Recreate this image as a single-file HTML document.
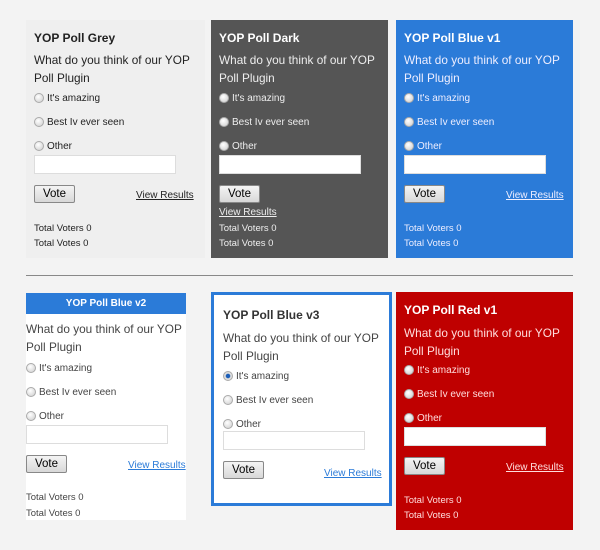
<!DOCTYPE html><html><head><style>
body{margin:0;width:600px;height:550px;background:#f3f3f3;font-family:"Liberation Sans",Arial,sans-serif;position:relative;overflow:hidden}
.p{position:absolute}
.a{position:absolute;white-space:nowrap}
.t{font-weight:bold;font-size:12px}
.q{font-size:11.8px;line-height:18px}
.o{font-size:10px}
.r{display:inline-block;width:10px;height:10px;border-radius:50%;background:radial-gradient(circle at 40% 35%,#fff,#ccc);border:1px solid #aaa;vertical-align:-2px;margin-right:3px;box-sizing:border-box}
.in{position:absolute;height:19px;background:#fff;border:1px solid #ddd;box-sizing:border-box}
.b{position:absolute;width:41px;height:18px;border:1px solid #888;border-radius:2px;background:linear-gradient(#f4f4f4,#d8d8d8);font-size:11.5px;text-align:center;line-height:16px;color:#000;box-sizing:border-box}
.v{font-size:10px;text-decoration:underline}
.s{font-size:9.5px}
</style></head><body>
<!-- grey -->
<div class="p" style="left:26px;top:20px;width:179px;height:238px;background:#efefef;color:#222">
<div class="a t" style="left:8px;top:11px">YOP Poll Grey</div>
<div class="a q" style="left:8px;top:31px">What do you think of our YOP<br>Poll Plugin</div>
<div class="a o" style="left:8px;top:73px"><span class="r"></span>It's amazing</div>
<div class="a o" style="left:8px;top:97px"><span class="r"></span>Best Iv ever seen</div>
<div class="a o" style="left:8px;top:121px"><span class="r"></span>Other</div>
<div class="in" style="left:8px;top:135px;width:142px"></div>
<div class="b" style="left:8px;top:165px">Vote</div>
<div class="a v" style="left:110px;top:170px;color:#222">View Results</div>
<div class="a s" style="left:8px;top:203px">Total Voters 0</div>
<div class="a s" style="left:8px;top:218px">Total Votes 0</div>
</div>
<!-- dark -->
<div class="p" style="left:211px;top:20px;width:177px;height:238px;background:#555;color:#eee">
<div class="a t" style="left:8px;top:11px;color:#fff">YOP Poll Dark</div>
<div class="a q" style="left:8px;top:31px">What do you think of our YOP<br>Poll Plugin</div>
<div class="a o" style="left:8px;top:73px"><span class="r"></span>It's amazing</div>
<div class="a o" style="left:8px;top:97px"><span class="r"></span>Best Iv ever seen</div>
<div class="a o" style="left:8px;top:121px"><span class="r"></span>Other</div>
<div class="in" style="left:8px;top:135px;width:142px"></div>
<div class="b" style="left:8px;top:165px">Vote</div>
<div class="a v" style="left:8px;top:187px">View Results</div>
<div class="a s" style="left:8px;top:203px">Total Voters 0</div>
<div class="a s" style="left:8px;top:218px">Total Votes 0</div>
</div>
<!-- blue v1 -->
<div class="p" style="left:396px;top:20px;width:177px;height:238px;background:#2b7bd8;color:#eef">
<div class="a t" style="left:8px;top:11px;color:#fff">YOP Poll Blue v1</div>
<div class="a q" style="left:8px;top:31px">What do you think of our YOP<br>Poll Plugin</div>
<div class="a o" style="left:8px;top:73px"><span class="r"></span>It's amazing</div>
<div class="a o" style="left:8px;top:97px"><span class="r"></span>Best Iv ever seen</div>
<div class="a o" style="left:8px;top:121px"><span class="r"></span>Other</div>
<div class="in" style="left:8px;top:135px;width:142px"></div>
<div class="b" style="left:8px;top:165px">Vote</div>
<div class="a v" style="left:110px;top:170px">View Results</div>
<div class="a s" style="left:8px;top:203px">Total Voters 0</div>
<div class="a s" style="left:8px;top:218px">Total Votes 0</div>
</div>
<div class="p" style="left:26px;top:275px;width:547px;height:1px;background:#888"></div>
<!-- blue v2 -->
<div class="p" style="left:26px;top:293px;width:160px;height:227px;background:#fff;color:#444">
<div class="a" style="left:0;top:0;width:160px;height:21px;background:#2b7bd8;color:#fff;font-weight:bold;font-size:10px;text-align:center;line-height:21px">YOP Poll Blue v2</div>
<div class="a q" style="left:0;top:27px">What do you think of our YOP<br>Poll Plugin</div>
<div class="a o" style="left:0;top:70px"><span class="r"></span>It's amazing</div>
<div class="a o" style="left:0;top:94px"><span class="r"></span>Best Iv ever seen</div>
<div class="a o" style="left:0;top:118px"><span class="r"></span>Other</div>
<div class="in" style="left:0;top:132px;width:142px"></div>
<div class="b" style="left:0;top:162px">Vote</div>
<div class="a v" style="left:102px;top:167px;color:#2b7bd8">View Results</div>
<div class="a s" style="left:0;top:199px">Total Voters 0</div>
<div class="a s" style="left:0;top:215px">Total Votes 0</div>
</div>
<!-- blue v3 -->
<div class="p" style="left:211px;top:292px;width:181px;height:214px;background:#fff;border:3px solid #2b7bd8;box-sizing:border-box;color:#444">
<div class="a t" style="left:9px;top:13px;color:#333">YOP Poll Blue v3</div>
<div class="a q" style="left:9px;top:34px">What do you think of our YOP<br>Poll Plugin</div>
<div class="a o" style="left:9px;top:76px"><span class="r" style="background:radial-gradient(circle,#1d5fb8 35%,#ddd 45%)"></span>It's amazing</div>
<div class="a o" style="left:9px;top:100px"><span class="r"></span>Best Iv ever seen</div>
<div class="a o" style="left:9px;top:124px"><span class="r"></span>Other</div>
<div class="in" style="left:9px;top:136px;width:142px"></div>
<div class="b" style="left:9px;top:166px">Vote</div>
<div class="a v" style="left:110px;top:173px;color:#2b7bd8">View Results</div>
</div>
<!-- red -->
<div class="p" style="left:396px;top:292px;width:177px;height:238px;background:#bf0000;color:#fdd">
<div class="a t" style="left:8px;top:11px;color:#fff">YOP Poll Red v1</div>
<div class="a q" style="left:8px;top:32px">What do you think of our YOP<br>Poll Plugin</div>
<div class="a o" style="left:8px;top:73px"><span class="r"></span>It's amazing</div>
<div class="a o" style="left:8px;top:97px"><span class="r"></span>Best Iv ever seen</div>
<div class="a o" style="left:8px;top:121px"><span class="r"></span>Other</div>
<div class="in" style="left:8px;top:135px;width:142px"></div>
<div class="b" style="left:8px;top:165px">Vote</div>
<div class="a v" style="left:110px;top:170px">View Results</div>
<div class="a s" style="left:8px;top:203px">Total Voters 0</div>
<div class="a s" style="left:8px;top:218px">Total Votes 0</div>
</div>
</body></html>
